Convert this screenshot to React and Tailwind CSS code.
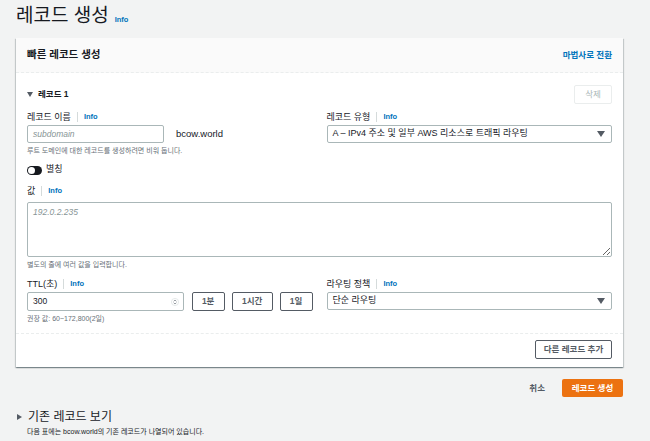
import React from 'react';

const font = "font-['Liberation_Sans','Noto_Sans_CJK_KR',sans-serif]";

function Info() {
  return (
    <span className="flex items-center">
      <span className="mx-[6px] h-[10px] w-px bg-[#d5dbdb]" />
      <span className="text-[7.5px] font-bold text-[#0073bb]">Info</span>
    </span>
  );
}

function Label({ children }) {
  return (
    <div className="flex h-[12px] items-center text-[9px] leading-[12px] text-[#16191f]">
      {children}
      <Info />
    </div>
  );
}

function Caret() {
  return (
    <svg width="8" height="6" viewBox="0 0 8 6">
      <path d="M0 0h8L4 6z" fill="#545b64" />
    </svg>
  );
}

function Select({ value }) {
  return (
    <div className="mt-[2px] flex h-[18px] items-center justify-between rounded-[2px] border border-[#aab7b8] bg-white pl-[5px] pr-[6px] text-[9px] text-[#16191f]">
      <span>{value}</span>
      <Caret />
    </div>
  );
}

function SmallButton({ children, className = '' }) {
  return (
    <div className={`flex h-[19px] items-center justify-center rounded-[2px] border border-[#545b64] bg-white text-[8.5px] font-bold text-[#545b64] ${className}`}>
      {children}
    </div>
  );
}

export default function App() {
  return (
    <div className={`${font} h-[441px] w-[650px] overflow-hidden bg-[#f2f3f3] pl-[16px] pr-[27px]`}>
      {/* Title */}
      <div className="flex h-[38px] items-center pb-[6px]">
        <h1 className="text-[19px] leading-[22px] text-[#16191f]">레코드 생성</h1>
        <span className="ml-[6px] mt-[8px] text-[7.5px] font-bold text-[#0073bb]">Info</span>
      </div>

      {/* Card */}
      <div className="bg-white shadow-[0_1px_1px_0_rgba(0,28,36,0.3),1px_1px_1px_0_rgba(0,28,36,0.15),-1px_1px_1px_0_rgba(0,28,36,0.15)]">
        <div className="flex h-[35px] items-center justify-between border-b border-dashed border-[#eaeded] bg-[#fafafa] px-[11px]">
          <span className="text-[10.5px] font-bold text-[#16191f]">빠른 레코드 생성</span>
          <span className="text-[8.5px] font-bold text-[#0073bb]">마법사로 전환</span>
        </div>

        <div className="px-[11px] pt-[12px]">
          <div className="flex h-[19px] items-center justify-between">
            <div className="flex items-center gap-[5px] text-[8.5px] font-bold text-[#16191f]">
              <svg width="6" height="5" viewBox="0 0 6 5">
                <path d="M0 0h6L3 5z" fill="#545b64" />
              </svg>
              레코드 1
            </div>
            <div className="flex h-[19px] w-[38px] items-center justify-center rounded-[2px] border border-[#eaeded] bg-white text-[8.5px] text-[#aab7b8]">
              삭제
            </div>
          </div>

          <div className="mt-[7px] grid grid-cols-2 gap-x-[14px]">
            <div>
              <Label>레코드 이름</Label>
              <div className="mt-[2px] flex items-center">
                <div className="flex h-[18px] w-[137px] items-center rounded-[2px] border border-[#aab7b8] bg-white pl-[5px] text-[8.5px] italic text-[#879596]">
                  subdomain
                </div>
                <span className="ml-[12px] text-[9.5px] text-[#16191f]">bcow.world</span>
              </div>
            </div>
            <div>
              <Label>레코드 유형</Label>
              <Select value="A – IPv4 주소 및 일부 AWS 리소스로 트래픽 라우팅" />
            </div>
          </div>
          <div className="mt-[2px] text-[7px] leading-[12px] text-[#687078]">
            루트 도메인에 대한 레코드를 생성하려면 비워 둡니다.
          </div>

          <div className="mt-[6px] flex h-[14px] items-center gap-[4px]">
            <div className="relative h-[9px] w-[15px] rounded-full bg-[#16191f]">
              <div className="absolute left-[1px] top-[1px] h-[7px] w-[7px] rounded-full bg-white" />
            </div>
            <span className="text-[9px] text-[#16191f]">별칭</span>
          </div>

          <div className="mt-[8px]">
            <Label>값</Label>
          </div>
          <textarea
            className="mt-[5px] block h-[55px] w-full resize-y rounded-[2px] border border-[#aab7b8] bg-white px-[5px] py-[3px] text-[8.5px] italic text-[#16191f] placeholder:text-[#879596] outline-none"
            placeholder="192.0.2.235"
          />
          <div className="mt-[2px] text-[7px] leading-[11px] text-[#687078]">
            별도의 줄에 여러 값을 입력합니다.
          </div>

          <div className="mt-[8px] grid grid-cols-2 gap-x-[14px]">
            <div>
              <Label>TTL(초)</Label>
              <div className="mt-[2px] flex items-center">
                <div className="flex h-[19px] w-[157px] items-center justify-between rounded-[2px] border border-[#aab7b8] bg-white pl-[5px] pr-[4px] text-[8.5px] text-[#16191f]">
                  <span>300</span>
                  <svg width="8" height="8" viewBox="0 0 8 8">
                    <circle cx="4" cy="4" r="3.6" fill="none" stroke="#d5dbdb" strokeWidth="0.6" />
                    <path d="M2.6 3.3L4 2l1.4 1.3M2.6 4.7L4 6l1.4-1.3" fill="none" stroke="#687078" strokeWidth="0.7" />
                  </svg>
                </div>
                <SmallButton className="ml-[8px] w-[33px]">1분</SmallButton>
                <SmallButton className="ml-[7px] w-[41px]">1시간</SmallButton>
                <SmallButton className="ml-[7px] w-[33px]">1일</SmallButton>
              </div>
              <div className="mt-[2px] text-[7px] leading-[12px] text-[#687078]">
                권장 값: 60~172,800(2일)
              </div>
            </div>
            <div>
              <Label>라우팅 정책</Label>
              <Select value="단순 라우팅" />
            </div>
          </div>
        </div>

        <div className="mt-[8px] border-t border-dashed border-[#eaeded]" />
        <div className="flex justify-end px-[11px] pb-[8px] pt-[6px]">
          <SmallButton className="w-[77px]">다른 레코드 추가</SmallButton>
        </div>
      </div>

      {/* Footer actions */}
      <div className="mt-[12px] flex items-center justify-end">
        <span className="text-[8.5px] font-bold text-[#545b64]">취소</span>
        <div className="ml-[17px] flex h-[18px] w-[61px] items-center justify-center rounded-[2px] bg-[#ec7211] text-[8.5px] font-bold text-white">
          레코드 생성
        </div>
      </div>

      <div className="mt-[12px] flex items-center gap-[6px] pl-[1px]">
        <svg width="5" height="6" viewBox="0 0 5 6">
          <path d="M0 0v6l5-3z" fill="#545b64" />
        </svg>
        <span className="text-[12px] leading-[16px] text-[#16191f]">기존 레코드 보기</span>
      </div>
      <div className="mt-[1px] pl-[11px] text-[7px] leading-[12px] text-[#16191f]">
        다음 표에는 bcow.world의 기존 레코드가 나열되어 있습니다.
      </div>
    </div>
  );
}
